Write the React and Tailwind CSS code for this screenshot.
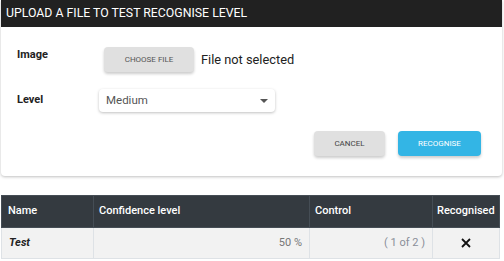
import React from 'react';

function App() {
  return (
    <div className="w-[504px] h-[261px] bg-white overflow-hidden font-['Roboto',sans-serif]">
      {/* upload card */}
      <section className="ml-px w-[501px] bg-white rounded-b shadow-[0_1px_3px_rgba(0,0,0,0.25)]">
        <h1 className="h-[27px] bg-[#212121] text-white text-[12.3px] leading-[27px] pl-[5px]">
          UPLOAD A FILE TO TEST RECOGNISE LEVEL
        </h1>
        <div className="pt-5 pb-5">
          <div className="flex items-center h-[25px]">
            <span className="w-[103px] pl-4 text-[11px] font-bold text-[#222] -mt-2">Image</span>
            <button className="w-[90px] h-[25px] bg-[#e0e0e0] text-[8px] text-[#555] rounded-sm shadow-[0_2px_3px_rgba(0,0,0,0.2)]">
              CHOOSE FILE
            </button>
            <span className="ml-[7px] text-[12.8px] text-[#222]">File not selected</span>
          </div>
          <div className="flex items-center h-[23px] mt-[17px]">
            <span className="w-[98px] pl-4 text-[11px] font-bold text-[#222]">Level</span>
            <div className="w-[176px] h-[23px] flex items-center justify-between px-[7px] bg-white rounded shadow-[0_1px_3px_rgba(0,0,0,0.25)]">
              <span className="text-[11.5px] text-[#555]">Medium</span>
              <svg width="8" height="4" viewBox="0 0 8 4">
                <path d="M0 0h8L4 4z" fill="#555" />
              </svg>
            </div>
          </div>
          <div className="flex justify-end gap-[13px] pr-[21px] mt-[19px]">
            <button className="w-[71px] h-[25px] bg-[#e0e0e0] text-[8px] text-[#444] rounded-sm shadow-[0_2px_3px_rgba(0,0,0,0.2)]">
              CANCEL
            </button>
            <button className="w-[83px] h-[25px] bg-[#33b5e5] text-[8px] text-white rounded-sm shadow-[0_2px_3px_rgba(0,0,0,0.2)]">
              RECOGNISE
            </button>
          </div>
        </div>
      </section>

      {/* results table */}
      <table className="ml-px mt-[19px] w-[499px] border-collapse text-[11px]">
        <thead>
          <tr className="h-[32px] bg-[#343a40] text-white text-left">
            <th className="w-[92px] pl-[6px] font-medium border border-[#454d55]">Name</th>
            <th className="w-[216px] pl-[5px] font-medium border border-[#454d55]">Confidence level</th>
            <th className="w-[123px] pl-[5px] font-medium border border-[#454d55]">Control</th>
            <th className="pl-[4px] font-medium border border-[#454d55]">Recognised</th>
          </tr>
        </thead>
        <tbody>
          <tr className="h-[31px] bg-[#f2f2f2]">
            <td className="pl-[7px] font-bold italic text-[#222] border border-[#dee2e6]">Test</td>
            <td className="pr-[7px] text-right text-[#777] border border-[#dee2e6]">50 %</td>
            <td className="pr-[7px] text-right text-[#8a8f99] border border-[#dee2e6]">( 1 of 2 )</td>
            <td className="text-center border border-[#dee2e6]">
              <svg className="inline-block" width="10" height="10" viewBox="0 0 10 10">
                <path d="M1 1l8 8M9 1l-8 8" stroke="#111" strokeWidth="1.8" />
              </svg>
            </td>
          </tr>
        </tbody>
      </table>
    </div>
  );
}

export default App;
